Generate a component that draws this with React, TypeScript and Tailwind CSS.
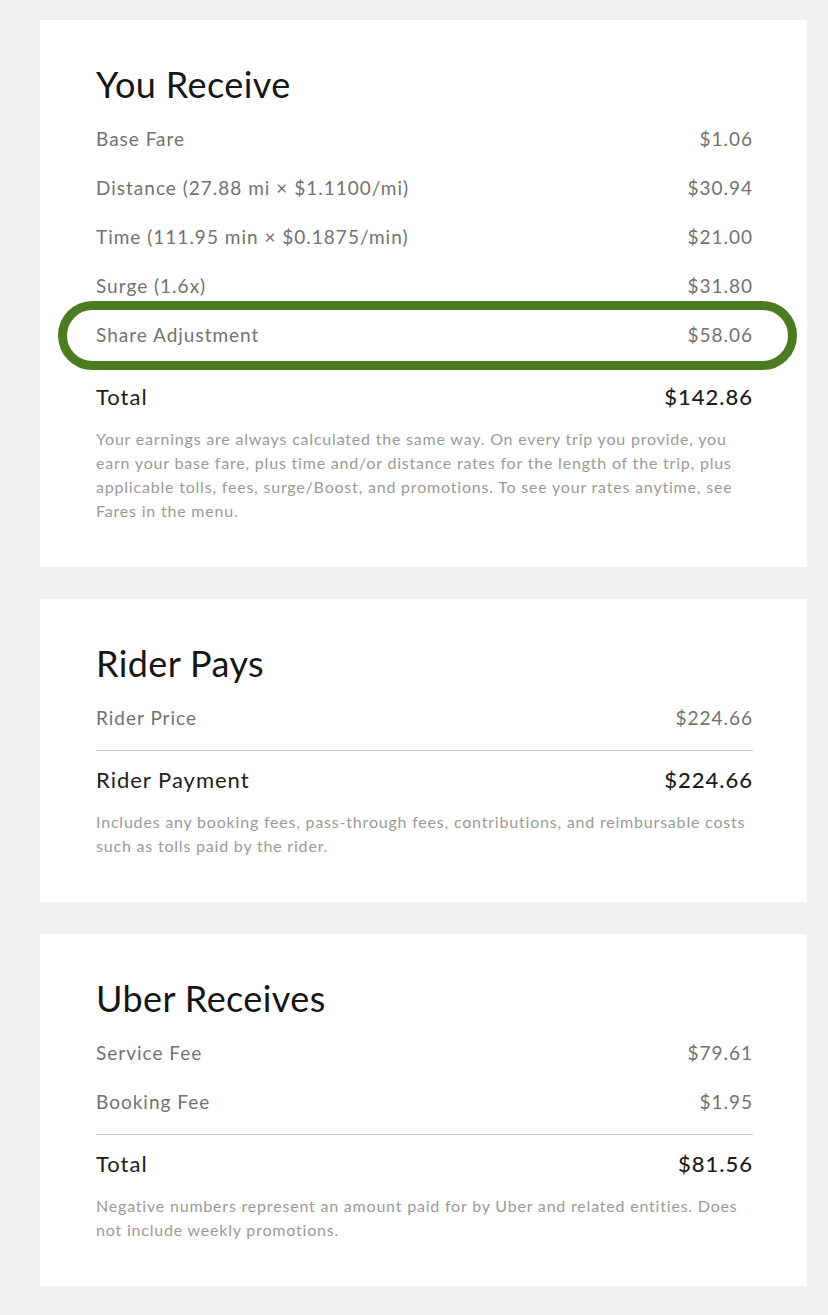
import React from "react";

type Line = { label: string; amount: string; circled?: boolean };

type Section = {
  title: string;
  lines: Line[];
  totalLabel: string;
  totalAmount: string;
  note: string;
};

const sections: Section[] = [
  {
    title: "You Receive",
    lines: [
      { label: "Base Fare", amount: "$1.06" },
      { label: "Distance (27.88 mi × $1.1100/mi)", amount: "$30.94" },
      { label: "Time (111.95 min × $0.1875/min)", amount: "$21.00" },
      { label: "Surge (1.6x)", amount: "$31.80" },
      { label: "Share Adjustment", amount: "$58.06", circled: true },
    ],
    totalLabel: "Total",
    totalAmount: "$142.86",
    note: "Your earnings are always calculated the same way. On every trip you provide, you earn your base fare, plus time and/or distance rates for the length of the trip, plus applicable tolls, fees, surge/Boost, and promotions. To see your rates anytime, see Fares in the menu.",
  },
  {
    title: "Rider Pays",
    lines: [{ label: "Rider Price", amount: "$224.66" }],
    totalLabel: "Rider Payment",
    totalAmount: "$224.66",
    note: "Includes any booking fees, pass-through fees, contributions, and reimbursable costs such as tolls paid by the rider.",
  },
  {
    title: "Uber Receives",
    lines: [
      { label: "Service Fee", amount: "$79.61" },
      { label: "Booking Fee", amount: "$1.95" },
    ],
    totalLabel: "Total",
    totalAmount: "$81.56",
    note: "Negative numbers represent an amount paid for by Uber and related entities. Does not include weekly promotions.",
  },
];

function BreakdownCard({ section }: { section: Section }) {
  return (
    <div className="w-[767px] bg-white pl-[56px] pr-[54px] pt-[42px] pb-[44px]">
      <h2 className="text-[36px] leading-[44px] tracking-[0.4px] text-[#161616]">{section.title}</h2>

      <div className="mt-[9px]">
        {section.lines.map((line) => (
          <div
            key={line.label}
            className="relative flex h-[49px] items-center justify-between text-[19px] tracking-[1px] text-[#727272]"
          >
            <span>{line.label}</span>
            <span>{line.amount}</span>
            {line.circled && (
              <div className="pointer-events-none absolute -top-[10px] -bottom-[10px] -left-[38px] -right-[44px] rounded-full border-[9px] border-[#4c7c22]" />
            )}
          </div>
        ))}
      </div>

      <div className="mt-[7px] border-t border-[#c6c6c6]" />

      <div className="mt-[4px] flex h-[48px] items-center justify-between text-[22px] tracking-[1px] text-[#1c1c1c]">
        <span>{section.totalLabel}</span>
        <span className="font-medium">{section.totalAmount}</span>
      </div>

      <p className="mt-[7px] text-[16px] leading-[24px] tracking-[0.8px] text-[#9a9a9a]">{section.note}</p>
    </div>
  );
}

export default function App() {
  return (
    <div
      className="min-h-[1315px] bg-[#f0f0f0] pl-[40px] pt-[20px] pb-[26px]"
      style={{ fontFamily: "Lato, 'Open Sans', sans-serif" }}
    >
      <div className="flex flex-col gap-[32px]">
        {sections.map((section) => (
          <BreakdownCard key={section.title} section={section} />
        ))}
      </div>
    </div>
  );
}
